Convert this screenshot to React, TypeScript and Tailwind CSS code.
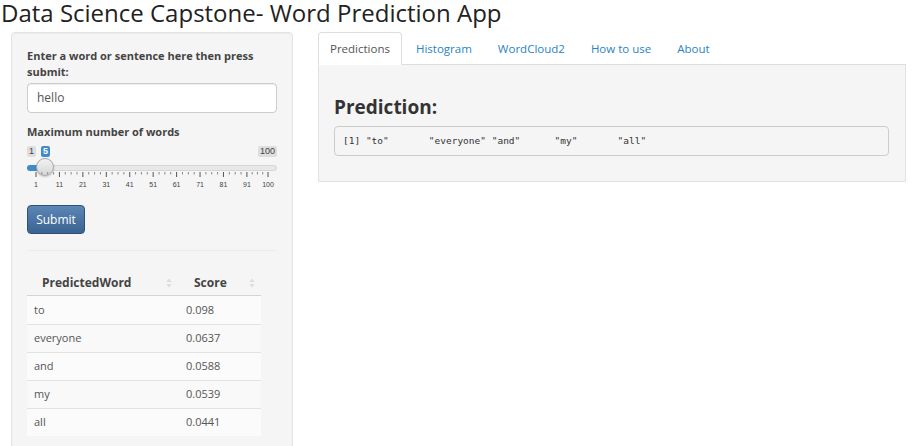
import React from "react";

const rows = [
  { word: "to", score: "0.098" },
  { word: "everyone", score: "0.0637" },
  { word: "and", score: "0.0588" },
  { word: "my", score: "0.0539" },
  { word: "all", score: "0.0441" },
];

const tabs = ["Predictions", "Histogram", "WordCloud2", "How to use", "About"];

// slider geometry: grid runs from x=9 to x=241 inside the 250px widget
const gridX = (v: number) => 9 + ((v - 1) / 99) * 232;
const bigTicks = [1, 11, 21, 31, 41, 51, 61, 71, 81, 91, 100];

function SortIcon() {
  return (
    <svg width="6" height="10" viewBox="0 0 6 10" className="shrink-0">
      <path d="M3 0.5 L5.5 4 H0.5 Z" fill="#dcdcdc" />
      <path d="M3 9.5 L5.5 6 H0.5 Z" fill="#dcdcdc" />
    </svg>
  );
}

function Slider() {
  const small: number[] = [];
  for (let i = 0; i < bigTicks.length - 1; i++) {
    const a = gridX(bigTicks[i]);
    const b = gridX(bigTicks[i + 1]);
    for (let k = 1; k < 4; k++) small.push(a + ((b - a) * k) / 4);
  }
  return (
    <div className="relative h-[49px] w-[250px] font-['Liberation_Sans',Arial,sans-serif]">
      <span className="absolute left-0 top-[3px] h-[11px] w-[9px] text-center rounded-[2px] bg-[#dedede] text-[#444] text-[9px] leading-[11px]">
        1
      </span>
      <span className="absolute left-[14px] top-[3px] h-[11px] w-[9px] text-center rounded-[2px] bg-[#428bca] text-white font-bold text-[9px] leading-[11px]">
        5
      </span>
      <span className="absolute right-0 top-[3px] h-[11px] px-[2px] rounded-[2px] bg-[#dedede] text-[#444] text-[9px] leading-[11px]">
        100
      </span>
      <div className="absolute left-0 right-0 top-[22px] h-[6px] rounded-[3px] bg-[#e8e8e8] border border-[#d6d6d6]" />
      <div className="absolute left-0 w-[18px] top-[22px] h-[6px] rounded-l-[3px] bg-[#428bca]" />
      <div className="absolute left-[9px] top-[15px] w-[18px] h-[18px] rounded-full border border-[#a8a8a8] bg-gradient-to-b from-[#f2f2f2] to-[#d6d6d6] shadow-[0_1px_2px_rgba(0,0,0,0.2)]" />
      <svg className="absolute left-0 top-[28px]" width="250" height="8">
        {bigTicks.map((v) => (
          <line key={v} x1={gridX(v)} x2={gridX(v)} y1="1" y2="6" stroke="#555" strokeWidth="1" />
        ))}
        {small.map((x, i) => (
          <line key={i} x1={x} x2={x} y1="1" y2="3.5" stroke="#888" strokeWidth="1" />
        ))}
      </svg>
      {bigTicks.map((v) => (
        <span
          key={v}
          className="absolute top-[37px] w-[20px] -ml-[10px] text-center text-[7px] leading-[9px] text-[#444]"
          style={{ left: gridX(v) }}
        >
          {v}
        </span>
      ))}
    </div>
  );
}

export default function App() {
  return (
    <div className="w-[913px] h-[446px] overflow-hidden bg-white font-['Open_Sans',sans-serif] text-[#333]">
      <h1 className="h-[32px] pl-[1px] text-[24px] leading-[26px] font-normal text-[#222]">
        Data Science Capstone- Word Prediction App
      </h1>

      <div className="flex items-start">
        {/* Sidebar */}
        <div className="ml-[11px] w-[282px] h-[430px] shrink-0 rounded-[4px] border border-[#e3e3e3] bg-[#f5f5f5] pt-[15px] px-[15px] shadow-[inset_0_1px_1px_rgba(0,0,0,0.04)]">
          <label className="block text-[11px] leading-[16px] font-bold text-[#444]">
            Enter a word or sentence here then press submit:
          </label>
          <div className="mt-[3px] h-[30px] rounded-[4px] border border-[#ccc] bg-white pl-[9px] flex items-center text-[12px] text-[#555] shadow-[inset_0_1px_1px_rgba(0,0,0,0.075)]">
            hello
          </div>

          <label className="block mt-[11px] text-[11px] leading-[16px] font-bold text-[#444]">
            Maximum number of words
          </label>
          <div className="mt-[3px]">
            <Slider />
          </div>

          <button className="mt-[13px] w-[58px] h-[29px] rounded-[4px] border border-[#2f5077] bg-gradient-to-b from-[#5b86b5] to-[#3b6392] text-white text-[12px]">
            Submit
          </button>

          <div className="mt-[16px] border-t border-[#ebebeb]" />

          {/* Table */}
          <div className="mt-[19px] w-[234px]">
            <div className="flex h-[26px] items-center border-b border-[#d4d4d4] text-[12px] font-bold text-[#444]">
              <div className="w-[152px] pl-[15px] pr-[7px] flex items-center justify-between">
                <span>PredictedWord</span>
                <SortIcon />
              </div>
              <div className="flex-1 pl-[15px] pr-[6px] flex items-center justify-between">
                <span>Score</span>
                <SortIcon />
              </div>
            </div>
            {rows.map((r, i) => (
              <div
                key={r.word}
                className={`flex h-[28px] items-center text-[11px] text-[#555] ${i > 0 ? "border-t border-[#e2e2e2]" : ""} ${i % 2 === 0 ? "bg-[#fbfbfb]" : "bg-[#f9f9f9]"}`}
              >
                <div className="w-[152px] pl-[7px]">{r.word}</div>
                <div className="flex-1 pl-[7px]">{r.score}</div>
              </div>
            ))}
          </div>
        </div>

        {/* Main panel */}
        <div className="ml-[25px] w-[588px]">
          <div className="flex h-[33px] items-end border-b border-[#ddd]">
            {tabs.map((t, i) => (
              <div
                key={t}
                className={`mr-[2px] -mb-px h-[33px] flex items-center px-[11px] rounded-t-[4px] border text-[11.5px] ${
                  i === 0
                    ? "border-[#ddd] border-b-white bg-white text-[#555]"
                    : "border-transparent text-[#2a84c4]"
                }`}
              >
                {t}
              </div>
            ))}
          </div>
          <div className="h-[117px] border border-t-0 border-[#e3e3e3] bg-[#f5f5f5] pt-[31px] pl-[15px] pr-[16px]">
            <h3 className="text-[19px] leading-[22px] font-bold text-[#333]">Prediction:</h3>
            <pre className="mt-[8px] h-[30px] rounded-[4px] border border-[#ccc] bg-[#f5f5f5] pl-[8px] flex items-center font-['DejaVu_Sans_Mono',monospace] text-[9.5px] text-[#333]">
              {'[1] "to"       "everyone" "and"      "my"       "all"     '}
            </pre>
          </div>
        </div>
      </div>
    </div>
  );
}
